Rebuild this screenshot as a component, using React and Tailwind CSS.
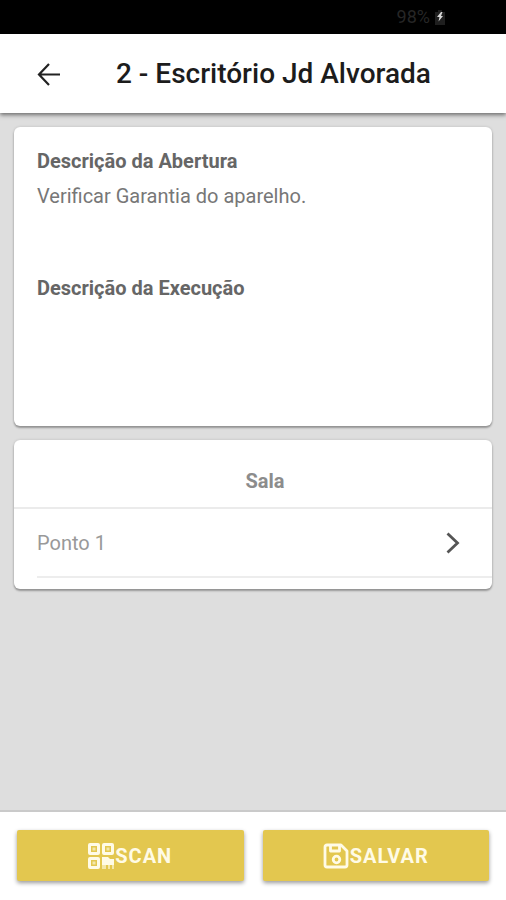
const DESCRIPTIONS = [
  { key: "abertura", label: "Descrição da Abertura", text: "Verificar Garantia do aparelho." },
  { key: "execucao", label: "Descrição da Execução", text: "" },
];

const POINTS = [{ id: 1, name: "Ponto 1" }];

function StatusBar() {
  return (
    <div className="flex h-[34px] items-center justify-end gap-1 bg-black pr-15 text-[#262626]">
      <span className="text-lg">98%</span>
      <svg viewBox="0 0 12 18" className="h-[18px] w-3" aria-hidden="true">
        <path d="M4 2h4v2h3v13H1V4h3z" fill="#1f1f1f" />
        <path d="M7 4 3 9h2.500L4.500 13.500 9 8H7L8.500 4z" fill="#d6d6d6" />
      </svg>
    </div>
  );
}

function Header({ title }) {
  return (
    <header className="relative z-10 flex h-[79px] items-center bg-white pl-9 shadow-[0_2px_4px_rgba(0,0,0,0.5)]">
      <button type="button" aria-label="Voltar" className="mr-14 flex size-6 items-center justify-center text-[#222]">
        <svg viewBox="0 0 24 24" className="size-6" fill="none" stroke="currentColor" strokeWidth="2.2" aria-hidden="true">
          <path d="M13 2 3 12.500 13 23M3 12.500h21" />
        </svg>
      </button>
      <h1 className="text-[28px] leading-8 font-medium text-[#1c1c1c]">{title}</h1>
    </header>
  );
}

function Card({ children, className }) {
  return (
    <section className={`rounded-md bg-white shadow-[0_2px_2px_rgba(0,0,0,0.3),0_0_3px_rgba(0,0,0,0.15)] ${className}`}>
      {children}
    </section>
  );
}

function QrIcon() {
  return (
    <svg viewBox="0 0 26 26" className="size-[26px]" fill="currentColor" aria-hidden="true">
      {["translate(0 0)", "translate(14 0)", "translate(0 14)"].map((t) => (
        <g key={t} transform={t}>
          <rect x="1.500" y="1.500" width="9" height="9" rx="0.500" fill="none" stroke="currentColor" strokeWidth="3" />
          <rect x="4.500" y="4.500" width="3" height="3" opacity="0.600" />
        </g>
      ))}
      <path d="M14 14h6l2 2h4v6H14z" />
      <path d="M14 22h4v4h-4zM20 22h2v4h-2zM24 22h2v4h-2z" opacity="0.600" />
    </svg>
  );
}

function SaveIcon() {
  return (
    <svg viewBox="0 0 26 26" className="size-[26px]" fill="none" stroke="currentColor" strokeWidth="2.800" strokeLinejoin="round" aria-hidden="true">
      <path d="M4 2h14l6 6v14a2 2 0 0 1-2 2H4a2 2 0 0 1-2-2V4a2 2 0 0 1 2-2z" />
      <path d="M7.500 2v6h9V2" />
      <circle cx="13.500" cy="16.500" r="3.300" />
    </svg>
  );
}

function ActionButton({ icon: Icon, children }) {
  return (
    <button
      type="button"
      className="flex h-[51px] flex-1 items-center justify-center gap-px rounded-xs bg-[#e3c74f] text-xl font-bold tracking-wider text-[#fffbe6] shadow-[0_2px_4px_rgba(0,0,0,0.4)]"
    >
      <Icon />
      {children}
    </button>
  );
}

export default function App() {
  return (
    <div className="flex min-h-screen flex-col bg-[#dedede] font-['Roboto',sans-serif]">
      <StatusBar />
      <Header title="2 - Escritório Jd Alvorada" />

      <main className="flex flex-1 flex-col gap-[14px] px-[14px] pt-[14px]">
        <Card className="px-[23px] pt-[22px] pb-[23px]">
          {DESCRIPTIONS.map((d) => (
            <div key={d.key} className="min-h-[127px]">
              <h2 className="text-xl leading-6 font-bold text-[#666]">{d.label}</h2>
              <p className="mt-[11px] text-xl leading-6 text-[#777]">{d.text}</p>
            </div>
          ))}
        </Card>

        <Card className="pb-[11px]">
          <h2 className="border-b-2 border-[#ebebeb] pt-[27px] pb-3 pl-6 text-center text-xl leading-7 font-bold text-[#8c8c8c]">
            Sala
          </h2>
          <ul className="pl-[23px]">
            {POINTS.map((p) => (
              <li key={p.id} className="border-b-2 border-[#ededed]">
                <button type="button" className="flex h-[67px] w-full items-center justify-between pr-8 text-xl text-[#999]">
                  {p.name}
                  <svg viewBox="0 0 14 22" className="h-[22px] w-[14px]" fill="none" stroke="#555" strokeWidth="2.8" aria-hidden="true">
                    <path d="M1.500 1.500 11.500 11 1.500 20.500" />
                  </svg>
                </button>
              </li>
            ))}
          </ul>
        </Card>
      </main>

      <footer className="flex gap-[19px] border-t-2 border-[#cacaca] bg-white px-[17px] pt-[18px] pb-[19px]">
        <ActionButton icon={QrIcon}>SCAN</ActionButton>
        <ActionButton icon={SaveIcon}>SALVAR</ActionButton>
      </footer>
    </div>
  );
}
